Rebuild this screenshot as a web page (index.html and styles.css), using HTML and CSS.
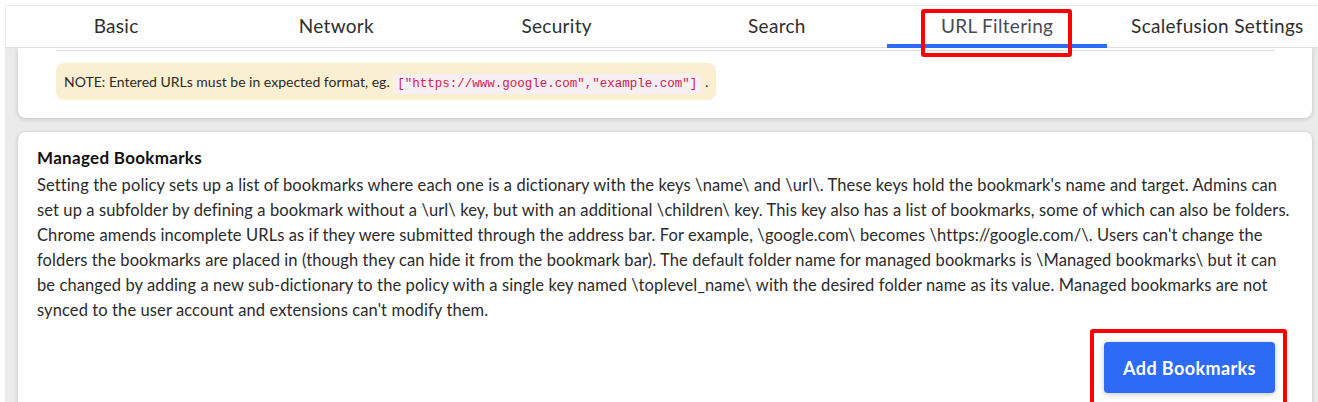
FILE: index.html
```html
<!DOCTYPE html>
<html lang="en">
<head>
    <meta charset="UTF-8">
    <meta name="viewport" content="width=device-width, initial-scale=1.0">
    <title>URL Filtering</title>
    <link rel="stylesheet" href="styles.css">
</head>
<body>
    <div class="page">
        <nav class="tabs">
            <div class="tab">Basic</div>
            <div class="tab">Network</div>
            <div class="tab">Security</div>
            <div class="tab">Search</div>
            <div class="tab active">URL Filtering<span class="mark mark-tab"></span></div>
            <div class="tab">Scalefusion Settings</div>
        </nav>

        <section class="card card-top">
            <hr class="divider">
            <div class="note">NOTE: Entered URLs must be in expected format, eg. <code>["https://www.google.com","example.com"]</code> .</div>
        </section>

        <section class="card card-bookmarks">
            <h3>Managed Bookmarks</h3>
            <p>Setting the policy sets up a list of bookmarks where each one is a dictionary with the keys \name\ and \url\. These keys hold the bookmark's name and target. Admins can set up a subfolder by defining a bookmark without a \url\ key, but with an additional \children\ key. This key also has a list of bookmarks, some of which can also be folders. Chrome amends incomplete URLs as if they were submitted through the address bar. For example, \google.com\ becomes \https://google.com/\. Users can't change the folders the bookmarks are placed in (though they can hide it from the bookmark bar). The default folder name for managed bookmarks is \Managed bookmarks\ but it can be changed by adding a new sub-dictionary to the policy with a single key named \toplevel_name\ with the desired folder name as its value. Managed bookmarks are not synced to the user account and extensions can't modify them.</p>
            <div class="actions">
                <button class="btn-primary">Add Bookmarks</button>
                <span class="mark mark-btn"></span>
            </div>
        </section>
    </div>
</body>
</html>
```

FILE: styles.css
```css
body {
    margin: 0;
    padding: 0;
    background-color: #fff;
    font-family: Lato, "Noto Sans", sans-serif;
    color: #2b2b2b;
    overflow: hidden;
}
.page {
    margin: 5px 0 0 5px;
    height: 397px;
    background-color: #ebebeb;
    overflow: hidden;
}
.tabs {
    display: flex;
    height: 41px;
    background-color: #fff;
    border-top: 1px solid #ececec;
    border-left: 1px solid #ececec;
    border-bottom: 1px solid #dedede;
    position: relative;
    z-index: 2;
}
.tab {
    position: relative;
    flex: 0 0 220.25px;
    text-align: center;
    font-size: 19px;
    letter-spacing: 0.3px;
    line-height: 40px;
    color: #2e2e2e;
    white-space: nowrap;
}
.tab.active {
    color: #4a4a58;
    border-bottom: 4px solid #2f6cf6;
    line-height: 40px;
    height: 38px;
}
.mark {
    position: absolute;
    border: 4px solid #ff0000;
    border-radius: 3px;
    pointer-events: none;
}
.mark-tab {
    left: 34px;
    top: 3px;
    width: 143px;
    height: 40px;
}
.card {
    background-color: #fff;
    margin: 0 6px 0 13px;
    box-shadow: 0 1px 5px rgba(0, 0, 0, 0.18);
}
.card-top {
    padding: 2px 37px 18px 38px;
    border-radius: 0 0 8px 8px;
}
.divider {
    margin: 0;
    border: none;
    border-top: 1px solid #dcdcdc;
}
.note {
    display: inline-block;
    margin-top: 12px;
    padding: 0 8px;
    height: 37px;
    line-height: 37px;
    font-size: 14px;
    background-color: #faefd1;
    border-radius: 8px;
    color: #2b2b2b;
}
.note code {
    font-family: "Liberation Mono", monospace;
    font-size: 12.5px;
    color: #d6204f;
    background-color: #f7eff2;
    padding: 3px 4px;
    border-radius: 3px;
}
.card-bookmarks {
    margin-top: 14px;
    padding: 13px 19px 30px 19px;
    border-radius: 8px 8px 0 0;
}
.card-bookmarks h3 {
    margin: 0 0 3px;
    font-size: 17px;
    letter-spacing: 0.3px;
    line-height: 25px;
    font-weight: 700;
    color: #111;
}
.card-bookmarks p {
    margin: 0;
    font-size: 16.5px;
    letter-spacing: 0.1px;
    line-height: 25px;
    color: #2b2b2b;
}
.actions {
    position: relative;
    display: flex;
    justify-content: flex-end;
    margin-top: 19px;
    padding-right: 18px;
}
.btn-primary {
    width: 171px;
    height: 51px;
    border: none;
    border-radius: 4px;
    background-color: #2d6bf7;
    color: #fff;
    font-family: inherit;
    font-size: 18px;
    letter-spacing: 0.4px;
    font-weight: 700;
    box-shadow: 0 1px 5px rgba(0, 0, 0, 0.25);
    cursor: pointer;
}
.mark-btn {
    right: 6px;
    top: -13px;
    width: 189px;
    height: 72px;
}
```
